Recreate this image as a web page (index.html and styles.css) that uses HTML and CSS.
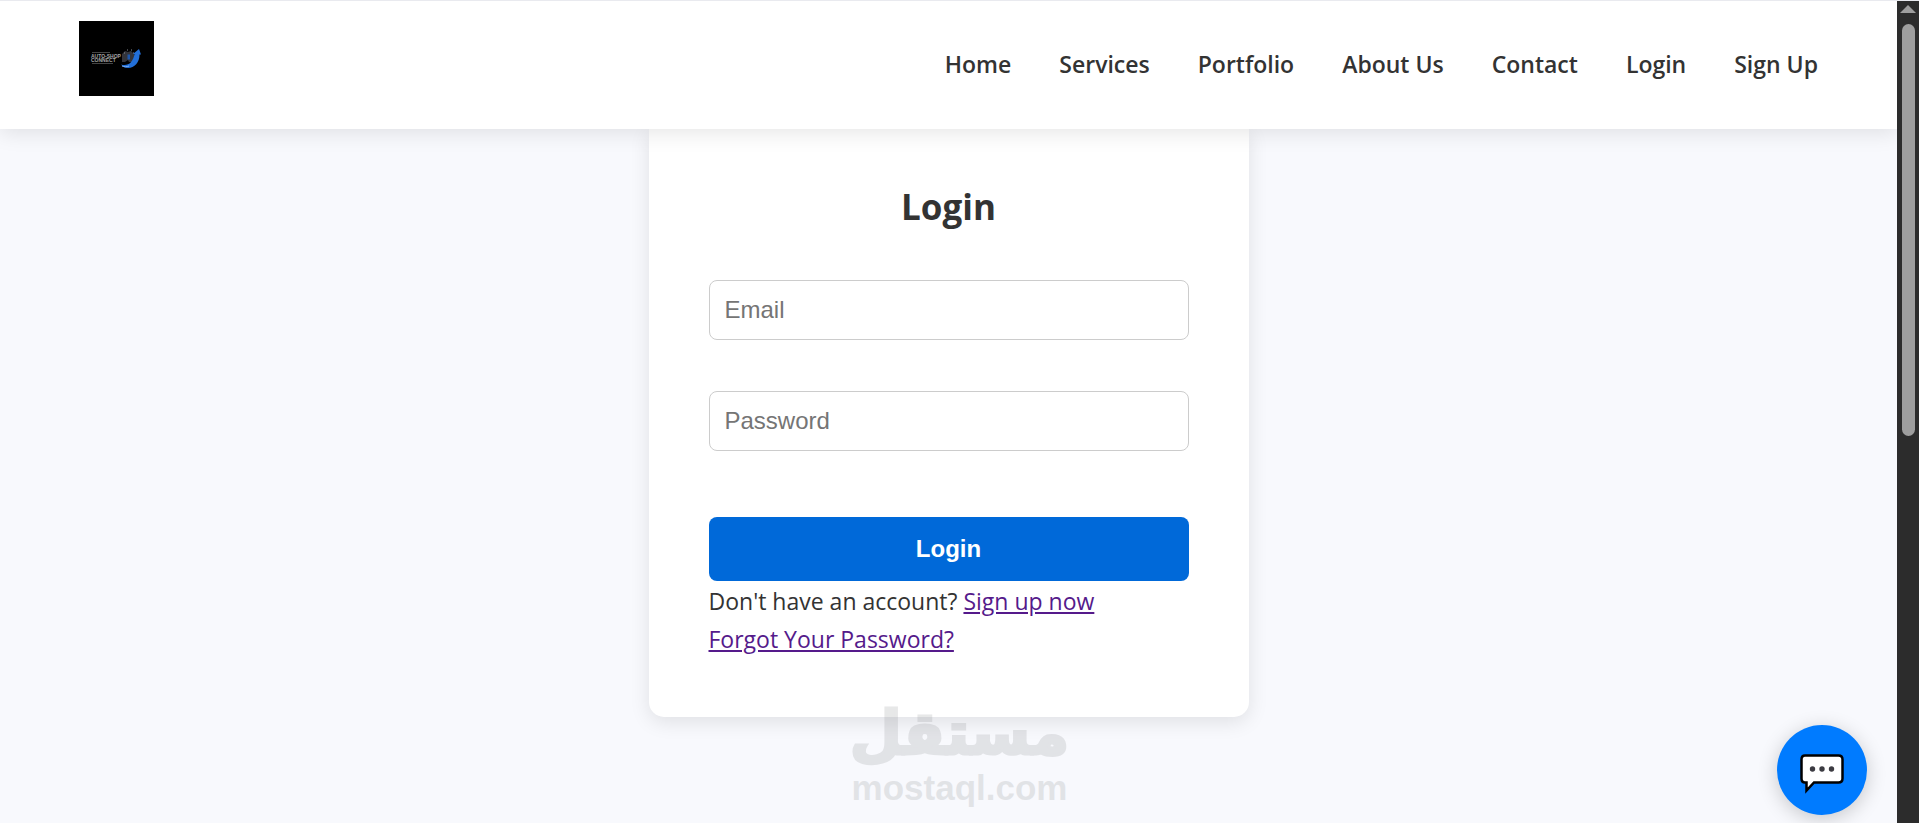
FILE: index.html
```
<!DOCTYPE html>
<html lang="en">
<head>
<meta charset="utf-8">
<meta name="viewport" content="width=device-width, initial-scale=1">
<title>Login</title>
<link rel="stylesheet" href="styles.css">
</head>
<body>
<div class="viewport">
  <div class="page">
    <header class="header">
      <a class="logo" href="#" aria-label="Auto-Shop Connect">
        <svg viewBox="0 0 75 75" aria-hidden="true">
          <rect width="75" height="75" fill="#000"/>
          <path d="M13 31.500h18M13 42.500h21" stroke="#444" stroke-width="1"/>
          <text x="12" y="37" class="logo-text">AUTO-SHOP</text>
          <text x="12" y="41" class="logo-text">CONNECT</text>
          <path d="M43 33l3-3 3 1 3-1 3 3v8h-5l-1-2-3 2h-3z" fill="#33343a"/>
          <path d="M48 29h1M52 29h1M54 32h1M45 32h1M51 43h2" stroke="#8a8d94"/>
          <rect x="48.500" y="33.500" width="2.500" height="5" fill="#1f56a8"/>
          <path d="M42 43.500c7 2 12-2 13.500-10.500h-1.500l6-5 2 5.500h-1.500c0 8-5 13.500-11.500 13.500-3 0-5-1-7-3.500z" fill="#226fd8"/>
          <path d="M43 45c2 1 5 1 7 0" stroke="#7fb0f0" fill="none"/>
        </svg>
      </a>
      <nav class="nav" aria-label="Main">
        <a href="#">Home</a>
        <a href="#">Services</a>
        <a href="#">Portfolio</a>
        <a href="#">About Us</a>
        <a href="#">Contact</a>
        <a href="#">Login</a>
        <a href="#">Sign Up</a>
      </nav>
    </header>
    <main class="main">
      <section class="card">
        <h1 class="title">Login</h1>
        <form class="form">
          <input class="field" type="email" placeholder="Email" aria-label="Email">
          <input class="field" type="password" placeholder="Password" aria-label="Password">
          <button class="submit" type="button">Login</button>
        </form>
        <p class="note">Don't have an account? <a href="#">Sign up now</a></p>
        <p class="note"><a href="#">Forgot Your Password?</a></p>
      </section>
    </main>
    <button class="chat" type="button" aria-label="Open chat">
      <svg viewBox="0 0 44 40" aria-hidden="true">
        <path d="M5 1.500H38.500Q42.500 1.500 42.500 5.500V24.500Q42.500 28.500 38.500 28.500H14L6.500 36.500V28.500H5Q1.500 28.500 1.500 24.500V5.500Q1.500 1.500 5 1.500z" fill="#fff" stroke="#000" stroke-width="2.500"/>
        <g fill="#3c3b42"><circle cx="12.500" cy="15" r="2.700"/><circle cx="22" cy="15" r="2.700"/><circle cx="31.500" cy="15" r="2.700"/></g>
      </svg>
    </button>
  </div>
  <div class="scrollbar" aria-hidden="true">
    <span class="arrow"></span>
    <span class="thumb"></span>
  </div>
  <div class="watermark" aria-hidden="true">
    <span class="mark-ar" lang="ar" dir="rtl">مستقل</span>
    <span class="mark-en">mostaql.com</span>
  </div>
</div>
</body>
</html>
```
FILE: styles.css
```
* { box-sizing: border-box; }

body {
  margin: 0;
  background: #f8f9fd;
  color: #333;
  font-family: "Segoe UI", "Open Sans", "Noto Sans", sans-serif;
  font-size: 23px;
  line-height: 38px;
}

.viewport {
  position: relative;
  display: flex;
  min-height: 100vh;
  overflow: hidden;
  border-top: 1px solid #e9eaef;
}

.page {
  position: relative;
  flex: 1;
  display: flex;
  flex-direction: column;
  overflow: hidden;
}

.header {
  position: relative;
  z-index: 1;
  display: flex;
  align-items: flex-start;
  justify-content: space-between;
  padding: 20px 79px 33px;
  background: #fff;
  box-shadow: 0 4px 20px rgba(0, 0, 0, 0.1);
}

.logo svg { display: block; width: 75px; }
.logo-text { font: bold 5px "Liberation Sans", sans-serif; fill: #a5a5a5; }

.nav {
  display: flex;
  gap: 48px;
  padding: 24px 0 0;
  font-weight: 600;
}
.nav a { color: #333; text-decoration: none; }

.main { display: flex; justify-content: center; padding: 0 24px; }

.card {
  width: 100%;
  max-width: 600px;
  padding: 49px 60px 59px;
  background: #fff;
  border-radius: 0 0 15px 15px;
  box-shadow: 0 5px 20px rgba(0, 0, 0, 0.1);
}

.title {
  margin: 0 0 44px;
  font-size: 35px;
  line-height: 58px;
  text-align: center;
}

.form { display: flex; flex-direction: column; margin-bottom: 1px; }

.field {
  width: 100%;
  margin-bottom: 51px;
  padding: 15px;
  border: 1px solid #ccc;
  border-radius: 8px;
  background: #fff;
  font: 24px/28px "Liberation Sans", Arial, sans-serif;
}
.field::placeholder { color: #757575; }

.submit {
  margin-top: 15px;
  padding: 18px;
  border: 0;
  border-radius: 8px;
  background: #0069d9;
  color: #fff;
  font: bold 24px/28px "Liberation Sans", Arial, sans-serif;
}

.note { margin: 0; }
.note a { color: #551a8b; }

.chat {
  position: absolute;
  right: 30px;
  bottom: 8px;
  display: grid;
  place-items: center;
  width: 90px;
  height: 90px;
  padding: 8px 0 0;
  border: 0;
  border-radius: 50%;
  background: #007bff;
  box-shadow: 0 4px 20px rgba(0, 0, 0, 0.2);
}
.chat svg { width: 44px; }

.scrollbar {
  display: flex;
  flex-direction: column;
  align-items: center;
  gap: 11px;
  width: 22px;
  padding-top: 4px;
  background: #2c2c2c;
}
.arrow {
  border: 8px solid transparent;
  border-top-width: 0;
  border-bottom-color: #9e9e9e;
}
.thumb {
  width: 13px;
  height: 50vh;
  border-radius: 7px;
  background: #9e9e9e;
}

.watermark {
  position: absolute;
  left: 0;
  right: 0;
  bottom: 15px;
  display: flex;
  flex-direction: column;
  align-items: center;
  color: #808285;
  opacity: 0.18;
  pointer-events: none;
}
.mark-ar {
  font: bold 60px/70px "DejaVu Sans", sans-serif;
  -webkit-text-stroke: 3px #808285;
}
.mark-en { font: bold 35px/40px "Liberation Sans", Arial, sans-serif; }
```
